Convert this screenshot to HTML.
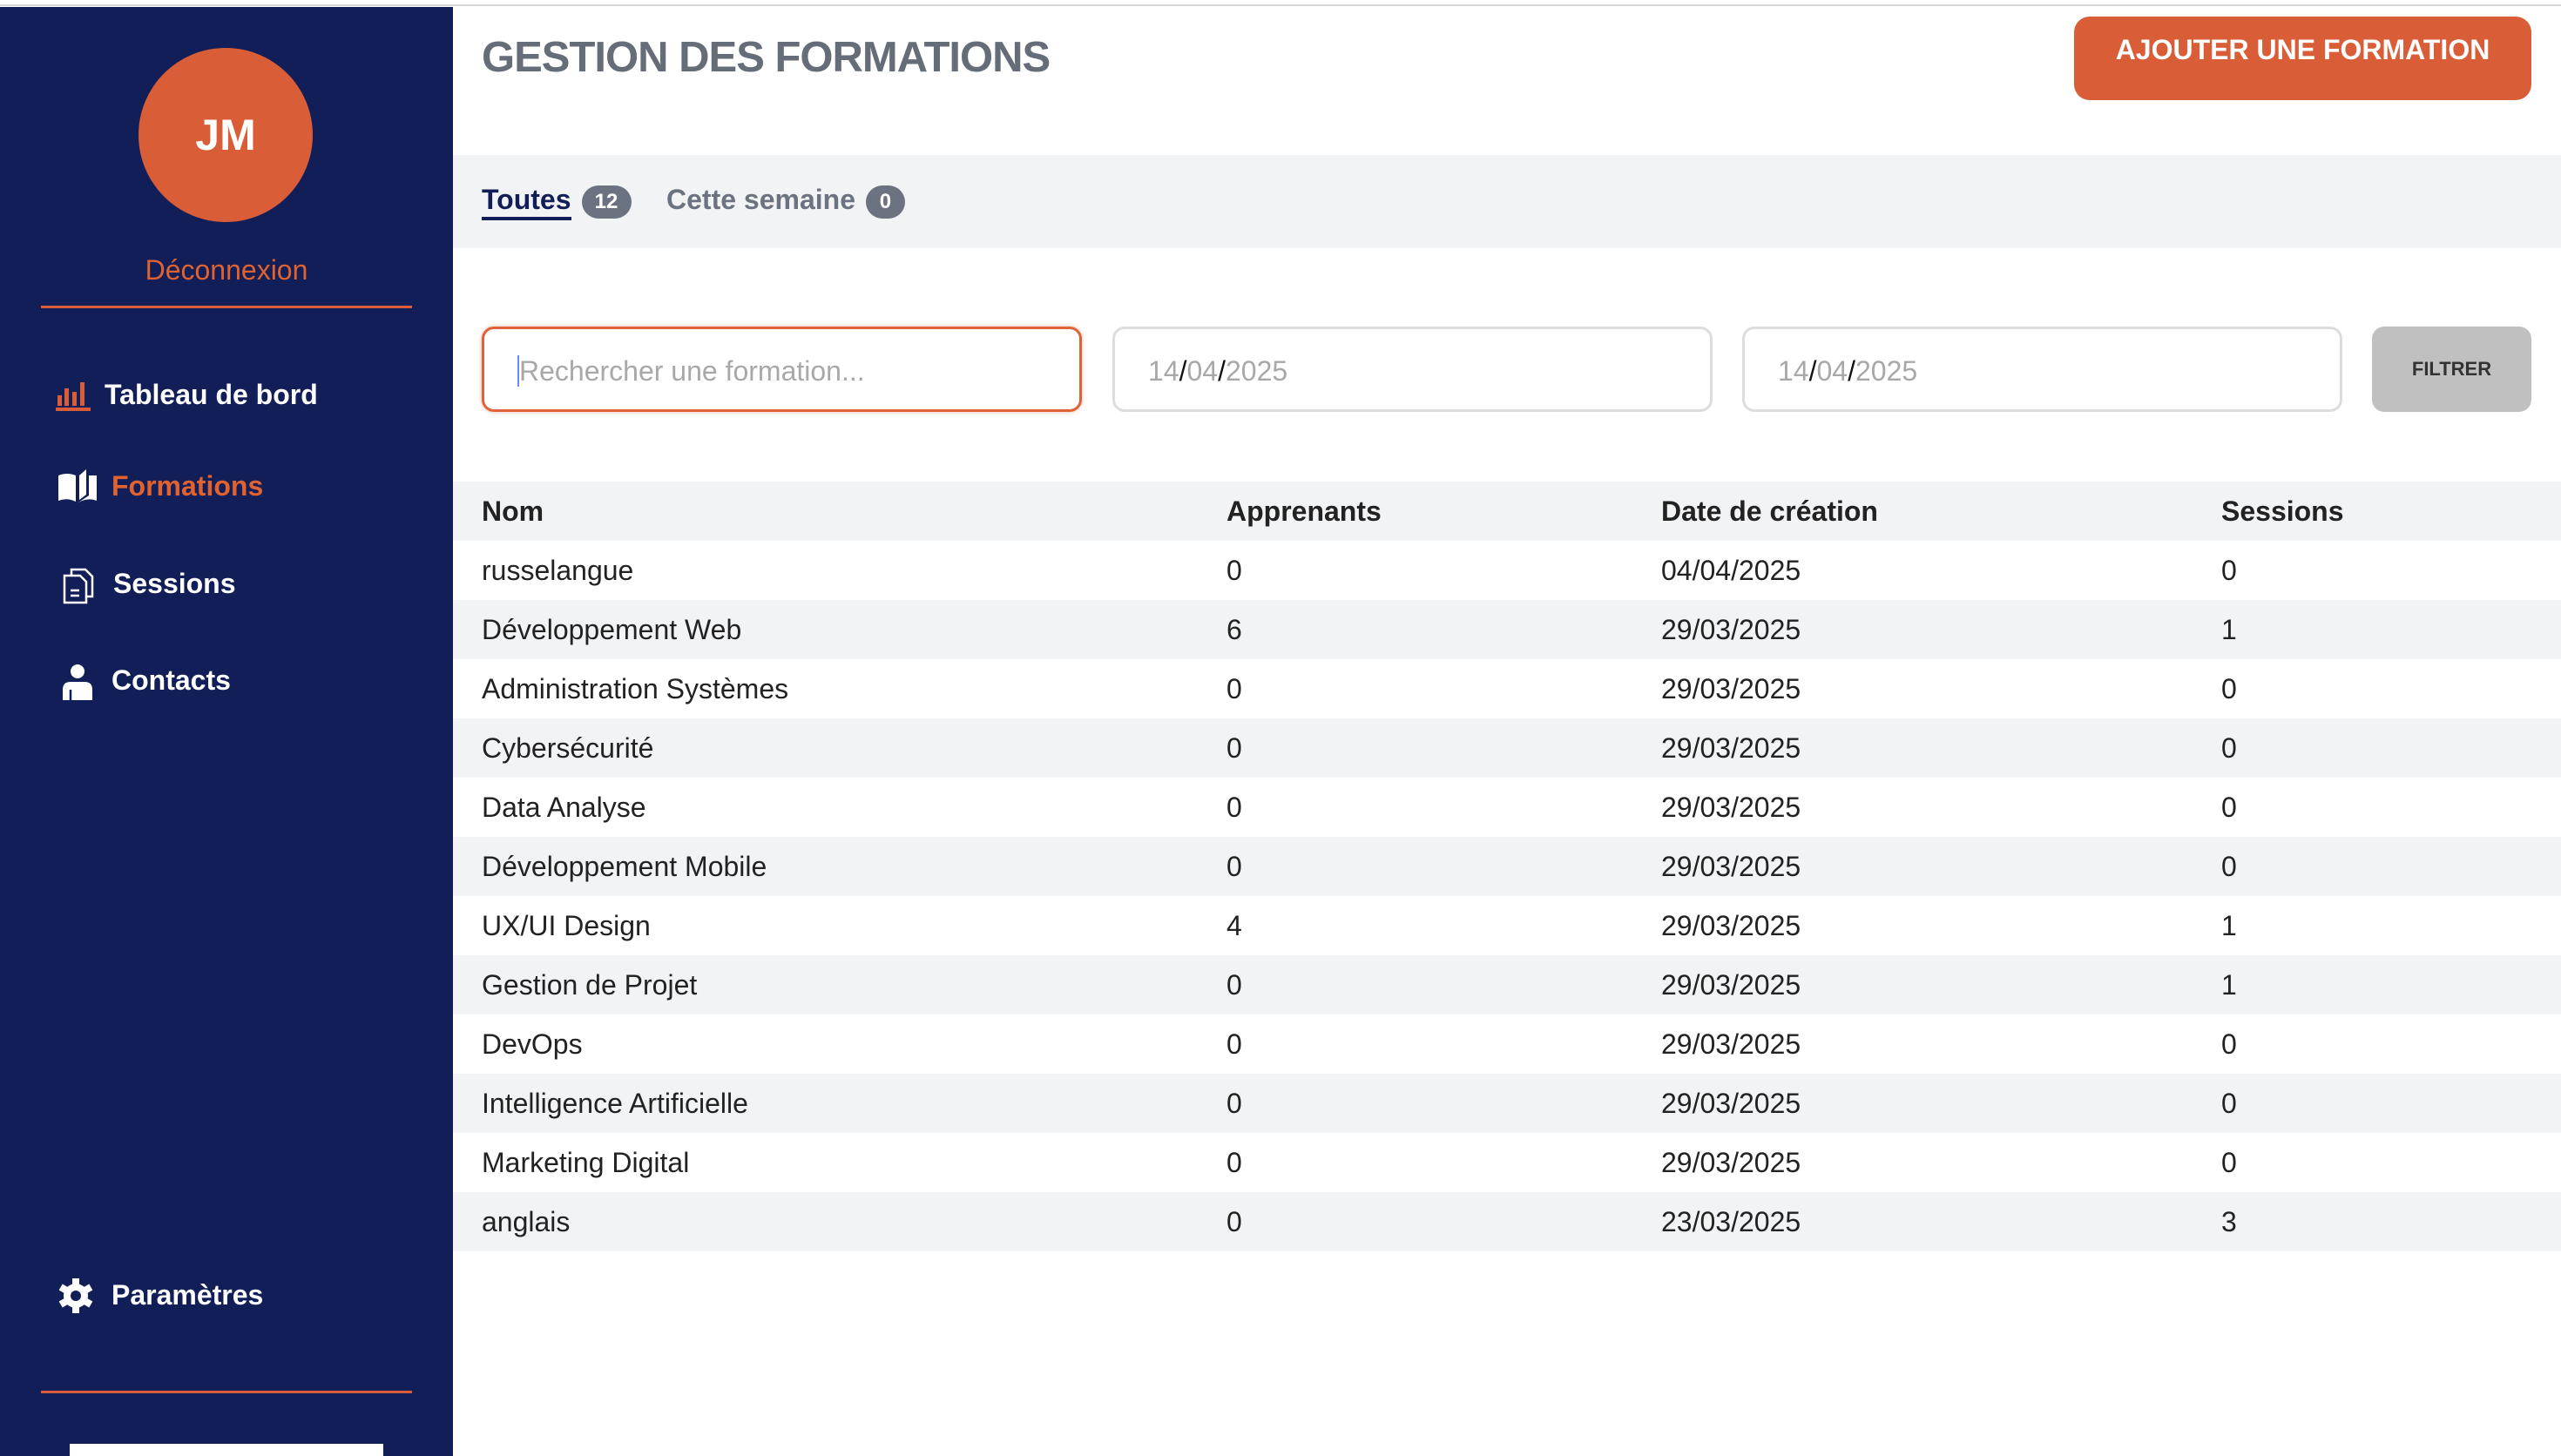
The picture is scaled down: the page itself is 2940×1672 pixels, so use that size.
<!DOCTYPE html>
<html><head><meta charset="utf-8"><style>
*{box-sizing:border-box;margin:0;padding:0}
html,body{width:2940px;height:1672px;overflow:hidden;background:#fff;font-family:"Liberation Sans",Arial,sans-serif}
.topline{position:absolute;left:0;top:0;width:2940px;height:7px;background:#fff;border-bottom:2px solid #d8d8d8}
.side{position:absolute;left:0;top:8px;width:520px;height:1664px;background:#121e58}
.avatar{position:absolute;left:159px;top:47px;width:200px;height:200px;border-radius:50%;background:#d95d36;color:#fff;font-weight:bold;font-size:50px;text-align:center;line-height:200px}
.logout{position:absolute;left:0;width:520px;top:284px;text-align:center;color:#e0622f;font-size:32px}
.hr{position:absolute;left:47px;width:426px;height:3px;background:#d95d36}
.nav{position:absolute;left:0;color:#fff;font-weight:bold;font-size:32px;line-height:40px}
.nav svg{position:absolute}
.main{position:absolute;left:520px;top:8px;right:0;bottom:0}
h1{position:absolute;left:33px;top:30px;font-size:49px;color:#656d78;font-weight:bold;letter-spacing:-1px}
.add{position:absolute;left:1861px;top:11px;width:525px;height:96px;border-radius:18px;background:#d95d36;color:#fff;font-weight:bold;font-size:32px;text-align:center;padding-top:20px}
.tabs{position:absolute;left:0;right:0;top:170px;height:107px;background:#f2f3f5}
.tab{position:absolute;top:31px;font-size:32px;font-weight:bold;line-height:40px}
.badge{display:inline-block;background:#6b7280;color:#fff;font-size:24px;border-radius:20px;height:38px;line-height:38px;text-align:center;vertical-align:middle;margin-left:12px}
.inp{position:absolute;top:367px;height:98px;border:3px solid #ddd;border-radius:14px;font-size:32px;color:#a8a8a8;padding:30px 0 0 38px}
.filt{position:absolute;left:2203px;top:367px;width:183px;height:98px;border-radius:14px;background:#c0c0c0;color:#333;font-size:22px;font-weight:bold;text-align:center;line-height:98px}
table{position:absolute;left:0;top:545px;width:2420px;border-collapse:collapse}
td,th{height:68px;font-size:32px;color:#222;text-align:left;padding:0;vertical-align:middle}
th{font-weight:bold}
tr:nth-child(odd){background:#f2f3f5}
td:first-child,th:first-child{padding-left:33px;width:888px}
td:nth-child(2),th:nth-child(2){width:499px}
td:nth-child(3),th:nth-child(3){width:643px}
</style></head><body>
<div class="topline"></div>
<div class="side">
 <div class="avatar">JM</div>
 <div class="logout">Déconnexion</div>
 <div class="hr" style="top:343px"></div>
 <div class="nav" style="top:425px;left:64px">
  <svg width="40" height="36" viewBox="0 0 40 36" style="left:0;top:3px"><g fill="#d95d36"><rect x="2" y="18" width="5" height="12"/><rect x="10" y="10" width="5" height="20"/><rect x="19" y="14" width="5" height="16"/><rect x="28" y="3" width="5" height="27"/><rect x="0" y="32" width="40" height="4"/></g></svg>
  <span style="position:absolute;left:56px;white-space:nowrap">Tableau de bord</span></div>
 <div class="nav" style="top:530px;left:66px">
  <svg width="46" height="40" viewBox="0 0 46 40" style="left:0;top:0"><path d="M1 8 Q11 4 21 8 V38 Q11 33 1 37 Z M25 8 L33 1 V30 L25 36 Z M36 8 L45 8 V37 Q35 33 24 39 L36 31 Z" fill="#fff"/></svg>
  <span style="position:absolute;left:62px;white-space:nowrap;color:#e0622f">Formations</span></div>
 <div class="nav" style="top:642px;left:72px">
  <svg width="36" height="42" viewBox="0 0 36 42" style="left:0;top:2px" fill="none" stroke="#fff" stroke-width="2.5"><path d="M2 9 H20 L27 16 V40 H2 Z"/><path d="M10 9 V2 H26 L34 10 V33 H27"/><path d="M9 26 H19 M9 32 H19"/></svg>
  <span style="position:absolute;left:58px;white-space:nowrap">Sessions</span></div>
 <div class="nav" style="top:753px;left:71px">
  <svg width="36" height="44" viewBox="0 0 36 44" style="left:0;top:1px"><circle cx="18" cy="9" r="8" fill="#fff"/><path d="M1 42 V30 Q1 21 10 21 H26 Q35 21 35 30 V42 Z" fill="#fff"/><path d="M10 42 V30" stroke="#121e58" stroke-width="2.5"/></svg>
  <span style="position:absolute;left:57px;white-space:nowrap">Contacts</span></div>
 <div class="nav" style="top:1459px;left:66px">
  <svg width="42" height="42" viewBox="0 0 42 42" style="left:0;top:0"><g fill="#fff"><circle cx="21" cy="21" r="14"/><rect x="17" y="1" width="8" height="40"/><rect x="17" y="1" width="8" height="40" transform="rotate(60 21 21)"/><rect x="17" y="1" width="8" height="40" transform="rotate(120 21 21)"/></g><circle cx="21" cy="21" r="6" fill="#121e58"/></svg>
  <span style="position:absolute;left:62px;white-space:nowrap">Paramètres</span></div>
 <div class="hr" style="top:1589px"></div>
 <div style="position:absolute;left:80px;top:1650px;width:360px;height:14px;background:#fff"></div>
</div>
<div class="main">
 <h1>GESTION DES FORMATIONS</h1>
 <div class="add">AJOUTER UNE FORMATION</div>
 <div class="tabs">
  <div class="tab" style="left:33px;color:#121e58"><span style="border-bottom:4px solid #121e58;padding-bottom:2px">Toutes</span><span class="badge" style="width:57px">12</span></div>
  <div class="tab" style="left:245px;color:#6b7280">Cette semaine<span class="badge" style="width:45px">0</span></div>
 </div>
 <div class="inp" style="left:33px;width:689px;border-color:#df6338;box-shadow:0 0 4px rgba(223,99,56,.5)"><span style="border-left:2px solid #6a8cf0"></span>Rechercher une formation...</div>
 <div class="inp" style="left:757px;width:689px">14<span style="color:#111">/</span>04<span style="color:#111">/</span>2025</div>
 <div class="inp" style="left:1480px;width:689px">14<span style="color:#111">/</span>04<span style="color:#111">/</span>2025</div>
 <div class="filt">FILTRER</div>
 <table>
  <tr><th>Nom</th><th>Apprenants</th><th>Date de création</th><th>Sessions</th></tr>
  <tr><td>russelangue</td><td>0</td><td>04/04/2025</td><td>0</td></tr>
  <tr><td>Développement Web</td><td>6</td><td>29/03/2025</td><td>1</td></tr>
  <tr><td>Administration Systèmes</td><td>0</td><td>29/03/2025</td><td>0</td></tr>
  <tr><td>Cybersécurité</td><td>0</td><td>29/03/2025</td><td>0</td></tr>
  <tr><td>Data Analyse</td><td>0</td><td>29/03/2025</td><td>0</td></tr>
  <tr><td>Développement Mobile</td><td>0</td><td>29/03/2025</td><td>0</td></tr>
  <tr><td>UX/UI Design</td><td>4</td><td>29/03/2025</td><td>1</td></tr>
  <tr><td>Gestion de Projet</td><td>0</td><td>29/03/2025</td><td>1</td></tr>
  <tr><td>DevOps</td><td>0</td><td>29/03/2025</td><td>0</td></tr>
  <tr><td>Intelligence Artificielle</td><td>0</td><td>29/03/2025</td><td>0</td></tr>
  <tr><td>Marketing Digital</td><td>0</td><td>29/03/2025</td><td>0</td></tr>
  <tr><td>anglais</td><td>0</td><td>23/03/2025</td><td>3</td></tr>
 </table>
</div>
</body></html>
